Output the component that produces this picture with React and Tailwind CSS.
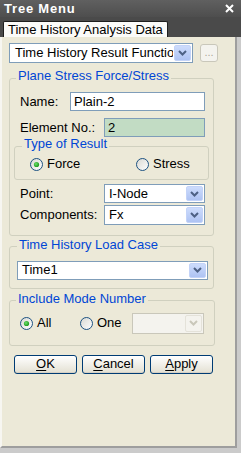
import React from "react";

function Chevron({ color = "#4d6185" }) {
  return (
    <svg width="9" height="6" viewBox="0 0 9 6">
      <path d="M1 1L4.5 4.5L8 1" fill="none" stroke={color} strokeWidth="2" />
    </svg>
  );
}

function DropButton({ disabled }) {
  return (
    <div
      className={`w-[17px] shrink-0 m-[1px] rounded-[2px] flex items-center justify-center border ${
        disabled
          ? "bg-[#f4f3ee] border-[#e4e2d9]"
          : "bg-gradient-to-b from-[#cddcfc] to-[#aec3f3] border-[#c3d3f8]"
      }`}
    >
      <Chevron color={disabled ? "#c9c7ba" : "#4d6185"} />
    </div>
  );
}

function Combo({ value, className = "", disabled, pad = "pl-[4px]" }) {
  return (
    <div
      className={`flex border ${
        disabled ? "border-[#c9c7ba] bg-[#f4f3ee]" : "border-[#7f9db9] bg-white"
      } ${className}`}
    >
      <span className={`flex-1 min-w-0 flex items-center overflow-hidden whitespace-nowrap ${pad}`}>
        {value}
      </span>
      <DropButton disabled={disabled} />
    </div>
  );
}

function Radio({ checked }) {
  return (
    <svg width="13" height="13" viewBox="0 0 13 13" className="shrink-0">
      <defs>
        <linearGradient id="radioBg" x1="0" y1="0" x2="1" y2="1">
          <stop offset="0" stopColor="#d8d8d2" />
          <stop offset="1" stopColor="#ffffff" />
        </linearGradient>
        <radialGradient id="radioDot" cx="0.4" cy="0.4" r="0.6">
          <stop offset="0" stopColor="#6be06b" />
          <stop offset="1" stopColor="#1e9a1e" />
        </radialGradient>
      </defs>
      <circle cx="6.5" cy="6.5" r="6" fill="url(#radioBg)" stroke="#1c5180" />
      {checked && <circle cx="6.5" cy="6.5" r="2.6" fill="url(#radioDot)" />}
    </svg>
  );
}

function RadioItem({ checked, label, className = "" }) {
  return (
    <div className={`flex items-center gap-[4px] ${className}`}>
      <Radio checked={checked} />
      <span className="leading-[14px]">{label}</span>
    </div>
  );
}

function Legend({ children, className = "" }) {
  return (
    <legend className={`px-[2px] pb-[4px] leading-[14px] text-[#0046d5] ${className}`}>
      {children}
    </legend>
  );
}

function Btn({ children }) {
  return (
    <button className="w-[63px] h-[19px] rounded-[3px] border border-[#003c74] bg-gradient-to-b from-white to-[#e3e0d2] flex items-center justify-center text-[13px] leading-[14px] text-black shadow-[inset_0_-1px_0_#d6d0c5]">
      {children}
    </button>
  );
}

export default function App() {
  return (
    <div className="w-[241px] h-[453px] bg-[#cbcbcb] flex flex-col overflow-hidden font-['Liberation_Sans',Arial,sans-serif] text-[13px] text-black">
      {/* title bar */}
      <div className="h-[17px] shrink-0 bg-gradient-to-b from-[#606060] to-[#4e4e4e] flex items-center justify-between pl-[4px] pr-[7px]">
        <span className="text-white font-bold leading-[17px] tracking-[0.8px]">Tree Menu</span>
        <svg width="9" height="9" viewBox="0 0 9 9">
          <path d="M1 1L8 8M8 1L1 8" stroke="#ffffff" strokeWidth="2" />
        </svg>
      </div>

      {/* tab strip */}
      <div className="h-[20px] shrink-0 bg-[#4a4a4a] flex items-end pl-[3px]">
        <div className="h-[16px] px-[4px] bg-[#fbfbf9] border border-b-0 border-[#1e1e1e] rounded-t-[2px] leading-[15px]">
          Time History Analysis Data
        </div>
      </div>

      {/* tab page */}
      <div className="w-[237px] h-[411px] shrink-0 bg-[#ece9d8] border-r-2 border-b-2 border-[#9e9e9e] border-l-2 border-l-[#f7f6f1] pl-[7px] pt-[6px] flex flex-col">
        <div className="flex items-center">
          <Combo value="Time History Result Function" className="w-[184px] h-[20px]" pad="pl-[5px]" />
          <button className="ml-[7px] w-[18px] h-[18px] rounded-[3px] border border-[#c9c7ba] bg-[#f4f3ee] text-[#aca899] text-[11px] leading-[12px] flex items-end justify-center pb-[3px]">
            ...
          </button>
        </div>

        {/* Plane Stress Force/Stress */}
        <fieldset className="mt-[6px] w-[205px] border border-[#d0d0bf] rounded-[3px]">
          <Legend className="ml-[6px]">Plane Stress Force/Stress</Legend>
          <div className="pt-[5px] pb-[10px] px-[4px]">
            <div className="flex items-center h-[19px] pl-[6px]">
              <span className="w-[50px]">Name:</span>
              <div className="w-[135px] h-[19px] border border-[#7f9db9] bg-white pl-[3px] flex items-center">
                Plain-2
              </div>
            </div>
            <div className="mt-[7px] flex items-center h-[19px] pl-[6px]">
              <span className="w-[84px]">Element No.:</span>
              <div className="w-[101px] h-[19px] border border-[#7f9db9] bg-[#c2dcc4] pl-[3px] flex items-center">
                2
              </div>
            </div>

            <fieldset className="w-[195px] border border-[#d0d0bf] rounded-[3px]">
              <Legend className="ml-[7px]">Type of Result</Legend>
              <div className="pt-[2px] pb-[8px] pl-[15px] flex items-center">
                <RadioItem checked label="Force" className="w-[106px]" />
                <RadioItem label="Stress" />
              </div>
            </fieldset>

            <div className="mt-[4px] flex items-center pl-[6px]">
              <span className="w-[84px]">Point:</span>
              <Combo value="I-Node" className="w-[101px] h-[19px]" />
            </div>
            <div className="mt-[1px] flex items-center pl-[6px]">
              <span className="w-[84px]">Components:</span>
              <Combo value="Fx" className="w-[101px] h-[20px]" />
            </div>
          </div>
        </fieldset>

        {/* Time History Load Case */}
        <fieldset className="mt-[2px] w-[205px] border border-[#d0d0bf] rounded-[3px]">
          <Legend className="ml-[7px]">Time History Load Case</Legend>
          <div className="pt-[5px] pb-[8px] pl-[7px]">
            <Combo value="Time1" className="w-[191px] h-[19px]" />
          </div>
        </fieldset>

        {/* Include Mode Number */}
        <fieldset className="mt-[3px] w-[206px] border border-[#d0d0bf] rounded-[3px]">
          <Legend className="ml-[6px]">Include Mode Number</Legend>
          <div className="pt-[3px] pb-[11px] pl-[10px] flex items-center">
            <RadioItem checked label="All" className="w-[60px]" />
            <RadioItem label="One" className="w-[52px]" />
            <Combo value="" disabled className="w-[72px] h-[21px]" />
          </div>
        </fieldset>

        <div className="mt-[9px] pl-[5px] flex gap-[5px]">
          <Btn>
            <span className="underline underline-offset-2">O</span>K
          </Btn>
          <Btn>
            <span className="underline underline-offset-2">C</span>ancel
          </Btn>
          <Btn>
            <span className="underline underline-offset-2">A</span>pply
          </Btn>
        </div>
      </div>
    </div>
  );
}
